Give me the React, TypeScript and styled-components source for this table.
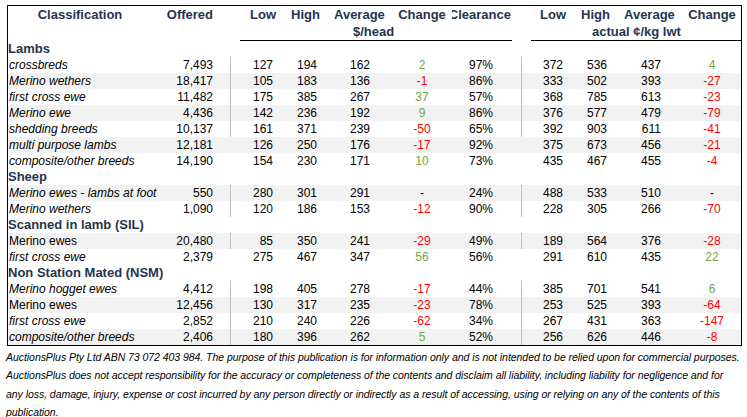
import React from "react";
import styled, { createGlobalStyle } from "styled-components";

const COLS = "152px 70px 46px 44px 53px 79px 69px 45px 44px 54px 77px";
const NAVY = "#1F3550";
const GREEN = "#70a845";
const RED = "#ff0000";

const Global = createGlobalStyle`
  html, body { margin: 0; padding: 0; background: #fff; }
  body { font-family: "Liberation Sans", Arial, sans-serif; }
`;

const Page = styled.div`
  padding: 5px 0 0 6px;
  width: 747px;
  height: 417px;
  box-sizing: border-box;
  overflow: hidden;
`;

const Table = styled.div`
  margin-left: 1px;
  width: 735px;
  border: 1px solid #000;
  box-sizing: border-box;
  font-family: "Liberation Sans", Arial, sans-serif;
`;

const Header = styled.div`
  display: grid;
  grid-template-columns: ${COLS};
  grid-template-rows: 18px 16px 1px;
  color: ${NAVY};
  font-weight: 700;
  font-size: 13px;
  line-height: 16px;
`;

type Align = "left" | "right" | "center";

const HeadCell = styled.div<{
  $col: string;
  $row: number;
  $align?: Align;
  $pl?: number;
  $pr?: number;
}>`
  grid-column: ${(p) => p.$col};
  grid-row: ${(p) => p.$row};
  text-align: ${(p) => p.$align ?? "left"};
  padding-left: ${(p) => p.$pl ?? 0}px;
  padding-right: ${(p) => p.$pr ?? 0}px;
  padding-top: ${(p) => (p.$row === 1 ? 1 : 0)}px;
  white-space: nowrap;
  min-width: 0;
`;

const ClippedHead = styled.div`
  grid-column: 7;
  grid-row: 1;
  display: flex;
  justify-content: flex-end;
  overflow: hidden;
  padding: 1px 10px 0 0;
  white-space: nowrap;
  & > span {
    flex-shrink: 0;
  }
`;

const Rule = styled.div<{ $col: string; $ml?: number; $mr?: number }>`
  grid-column: ${(p) => p.$col};
  grid-row: 3;
  margin-left: ${(p) => p.$ml ?? 0}px;
  margin-right: ${(p) => p.$mr ?? 0}px;
  background: #000;
  height: 1px;
`;

const CategoryRow = styled.div`
  height: 16px;
  line-height: 16px;
  font-weight: 700;
  font-size: 13px;
  color: ${NAVY};
  white-space: nowrap;
`;

const Row = styled.div<{ $stripe: boolean }>`
  display: grid;
  grid-template-columns: ${COLS};
  height: 16px;
  background: ${(p) => (p.$stripe ? "#f2f2f2" : "transparent")};
  font-size: 12px;
  line-height: 16px;
  color: #000;
`;

const Label = styled.div<{ $italic: boolean }>`
  font-style: ${(p) => (p.$italic ? "italic" : "normal")};
  padding-left: 1px;
  white-space: nowrap;
`;

const Cell = styled.div<{
  $align: Align;
  $pl?: number;
  $pr?: number;
  $sep?: boolean;
  $color?: string;
}>`
  text-align: ${(p) => p.$align};
  padding-left: ${(p) => p.$pl ?? 0}px;
  padding-right: ${(p) => p.$pr ?? 0}px;
  border-left: 1px solid ${(p) => (p.$sep ? "#bfbfbf" : "transparent")};
  color: ${(p) => p.$color ?? "#000"};
  white-space: nowrap;
`;

const Plain = styled.div<{ $align: Align; $pl?: number; $pr?: number; $color?: string }>`
  text-align: ${(p) => p.$align};
  padding-left: ${(p) => p.$pl ?? 0}px;
  padding-right: ${(p) => p.$pr ?? 0}px;
  color: ${(p) => p.$color ?? "#000"};
  white-space: nowrap;
`;

const Footer = styled.div`
  margin-top: 2px;
  font-family: "Liberation Sans", Arial, sans-serif;
  font-style: italic;
  font-size: 10.5px;
  line-height: 18.3px;
  color: #000;
`;

const FootLine = styled.div`
  white-space: nowrap;
  letter-spacing: -0.05px;
`;

type DataRow = {
  label: string;
  italic: boolean;
  offered: string;
  low: string;
  high: string;
  avg: string;
  change: string;
  clearance: string;
  low2: string;
  high2: string;
  avg2: string;
  change2: string;
  stripe: boolean;
  sep: boolean;
};

type Group = { title: string; rows: DataRow[] };

const r = (
  label: string,
  italic: boolean,
  vals: string[],
  stripe: boolean,
  sep: boolean
): DataRow => ({
  label,
  italic,
  offered: vals[0],
  low: vals[1],
  high: vals[2],
  avg: vals[3],
  change: vals[4],
  clearance: vals[5],
  low2: vals[6],
  high2: vals[7],
  avg2: vals[8],
  change2: vals[9],
  stripe,
  sep,
});

const groups: Group[] = [
  {
    title: "Lambs",
    rows: [
      r("crossbreds", true, ["7,493", "127", "194", "162", "2", "97%", "372", "536", "437", "4"], false, true),
      r("Merino wethers", true, ["18,417", "105", "183", "136", "-1", "86%", "333", "502", "393", "-27"], true, true),
      r("first cross ewe", true, ["11,482", "175", "385", "267", "37", "57%", "368", "785", "613", "-23"], false, true),
      r("Merino ewe", true, ["4,436", "142", "236", "192", "9", "86%", "376", "577", "479", "-79"], true, true),
      r("shedding breeds", true, ["10,137", "161", "371", "239", "-50", "65%", "392", "903", "611", "-41"], false, true),
      r("multi purpose lambs", true, ["12,181", "126", "250", "176", "-17", "92%", "375", "673", "456", "-21"], true, false),
      r("composite/other breeds", true, ["14,190", "154", "230", "171", "10", "73%", "435", "467", "455", "-4"], false, false),
    ],
  },
  {
    title: "Sheep",
    rows: [
      r("Merino ewes - lambs at foot", true, ["550", "280", "301", "291", "-", "24%", "488", "533", "510", "-"], true, true),
      r("Merino wethers", true, ["1,090", "120", "186", "153", "-12", "90%", "228", "305", "266", "-70"], false, true),
    ],
  },
  {
    title: "Scanned in lamb (SIL)",
    rows: [
      r("Merino ewes", false, ["20,480", "85", "350", "241", "-29", "49%", "189", "564", "376", "-28"], true, true),
      r("first cross ewe", true, ["2,379", "275", "467", "347", "56", "56%", "291", "610", "435", "22"], false, false),
    ],
  },
  {
    title: "Non Station Mated (NSM)",
    rows: [
      r("Merino hogget ewes", true, ["4,412", "198", "405", "278", "-17", "44%", "385", "701", "541", "6"], false, true),
      r("Merino ewes", false, ["12,456", "130", "317", "235", "-23", "78%", "253", "525", "393", "-64"], true, true),
      r("first cross ewe", true, ["2,852", "210", "240", "226", "-62", "34%", "267", "431", "363", "-147"], false, true),
      r("composite/other breeds", true, ["2,406", "180", "396", "262", "5", "52%", "256", "626", "446", "-8"], true, true),
    ],
  },
];

const changeColor = (v: string) => {
  if (v === "-") return "#000";
  return v.startsWith("-") ? RED : GREEN;
};

export default function App() {
  return (
    <>
      <Global />
      <Page>
        <Table>
          <Header>
            <HeadCell $col="1" $row={1} $align="center" $pr={8}>Classification</HeadCell>
            <HeadCell $col="2" $row={1} $align="right" $pr={17}>Offered</HeadCell>
            <HeadCell $col="3" $row={1} $align="right">Low</HeadCell>
            <HeadCell $col="4" $row={1} $align="right">High</HeadCell>
            <HeadCell $col="5" $row={1} $pl={14}>Average</HeadCell>
            <HeadCell $col="6" $row={1} $align="center" $pl={19}>Change</HeadCell>
            <ClippedHead><span>Clearance</span></ClippedHead>
            <HeadCell $col="8" $row={1} $align="right">Low</HeadCell>
            <HeadCell $col="9" $row={1} $align="right">High</HeadCell>
            <HeadCell $col="10" $row={1} $pl={14}>Average</HeadCell>
            <HeadCell $col="11" $row={1} $align="center" $pl={19}>Change</HeadCell>
            <HeadCell $col="5" $row={2} $pl={33}>$/head</HeadCell>
            <HeadCell $col="9 / span 2" $row={2} $pl={26}>actual ¢/kg lwt</HeadCell>
            <Rule $col="3 / span 5" $ml={10} $mr={9} />
            <Rule $col="8 / span 4" $ml={10} />
          </Header>
          {groups.map((g) => (
            <React.Fragment key={g.title}>
              <CategoryRow>{g.title}</CategoryRow>
              {g.rows.map((d, i) => (
                <Row key={g.title + i} $stripe={d.stripe}>
                  <Label $italic={d.italic}>{d.label}</Label>
                  <Plain $align="right" $pr={17}>{d.offered}</Plain>
                  <Cell $align="right" $pr={3} $sep={d.sep}>{d.low}</Cell>
                  <Plain $align="right" $pr={3}>{d.high}</Plain>
                  <Plain $align="right" $pr={3}>{d.avg}</Plain>
                  <Plain $align="center" $pl={19} $color={changeColor(d.change)}>{d.change}</Plain>
                  <Plain $align="right" $pr={28}>{d.clearance}</Plain>
                  <Cell $align="right" $pr={3} $sep={d.sep}>{d.low2}</Cell>
                  <Plain $align="right" $pr={3}>{d.high2}</Plain>
                  <Plain $align="right" $pr={3}>{d.avg2}</Plain>
                  <Plain $align="center" $pl={19} $color={changeColor(d.change2)}>{d.change2}</Plain>
                </Row>
              ))}
            </React.Fragment>
          ))}
        </Table>
        <Footer>
          <FootLine>AuctionsPlus Pty Ltd ABN 73 072 403 984. The purpose of this publication is for information only and is not intended to be relied upon for commercial purposes.</FootLine>
          <FootLine>AuctionsPlus does not accept responsibility for the accuracy or completeness of the contents and disclaim all liability, including liability for negligence and for</FootLine>
          <FootLine>any loss, damage, injury, expense or cost incurred by any person directly or indirectly as a result of accessing, using or relying on any of the contents of this</FootLine>
          <FootLine>publication.</FootLine>
        </Footer>
      </Page>
    </>
  );
}
